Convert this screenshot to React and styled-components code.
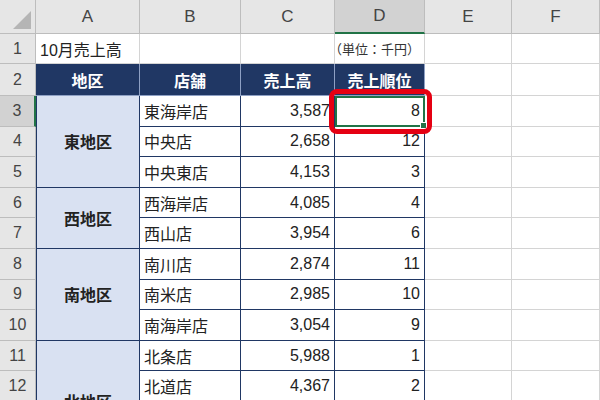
import React from "react"
import styled, { createGlobalStyle } from "styled-components"

const Global = createGlobalStyle`
  body { margin: 0; background: #fff; }
`

const NAVY = "#203764"
const GRID = "#d4d4d4"

const Sheet = styled.div`
  position: relative;
  width: 600px;
  height: 400px;
  overflow: hidden;
  font-family: "Liberation Sans", "Noto Sans CJK JP", sans-serif;
  font-size: 16px;
  color: #222;
`

const Grid = styled.div`
  display: grid;
  grid-template-columns: 36px 104px 101px 94px 90px 87px 88px;
  grid-template-rows: 34px 30px 32px repeat(12, 30.6px);
`

const Head = styled.div`
  grid-row: ${({ $r }) => $r};
  grid-column: ${({ $c }) => $c};
  background: ${({ $on }) => ($on ? "#d2d2d2" : "#e6e6e6")};
  color: #444;
  font-size: ${({ $col }) => ($col ? "17px" : "16px")};
  display: flex;
  align-items: center;
  justify-content: center;
  box-sizing: border-box;
  border-right: 1px solid ${({ $on, $col }) => ($on && !$col ? "#217346" : "#bdbdbd")};
  border-bottom: ${({ $on, $col }) => ($on && $col ? "2px solid #217346" : "1px solid #bdbdbd")};
  ${({ $on, $col }) => ($on && !$col ? "border-right-width: 2px;" : "")}
`

const Corner = styled(Head)`
  position: relative;
  &::after {
    content: "";
    position: absolute;
    right: 4px;
    bottom: 4px;
    border-left: 18px solid transparent;
    border-bottom: 18px solid #b5b5b5;
  }
`

const Cell = styled.div`
  grid-row: ${({ $r, $rs }) => ($rs ? `${$r} / span ${$rs}` : $r)};
  grid-column: ${({ $c }) => $c};
  background: ${({ $bg }) => $bg || "#fff"};
  color: ${({ $fg }) => $fg || "#222"};
  font-weight: ${({ $bold }) => ($bold ? 700 : 400)};
  display: flex;
  align-items: center;
  justify-content: ${({ $align }) => $align || "flex-start"};
  padding: 0 4px;
  box-sizing: border-box;
  white-space: nowrap;
  border-right: 1px solid ${({ $t }) => ($t ? NAVY : GRID)};
  border-bottom: 1px solid ${({ $t }) => ($t ? NAVY : GRID)};
  ${({ $left }) => ($left ? `border-left: 1px solid ${NAVY};` : "")}
  ${({ $small }) => ($small ? "font-size: 13px; align-items: flex-end; padding-bottom: 5px; color: #333;" : "")}
  ${({ $head }) => ($head ? "border-color: #8ea0c4;" : "")}
`

const Selected = styled.div`
  position: absolute;
  left: 335px;
  top: 96px;
  width: 90px;
  height: 31px;
  box-sizing: border-box;
  border: 2px solid #217346;
  &::after {
    content: "";
    position: absolute;
    right: -4px;
    bottom: -4px;
    width: 5px;
    height: 5px;
    background: #217346;
    border: 1px solid #fff;
  }
`

const Mark = styled.div`
  position: absolute;
  left: 329px;
  top: 89px;
  width: 103px;
  height: 45px;
  box-sizing: border-box;
  border: 5px solid #e50012;
  border-radius: 8px;
`

const rows = [
  ["東海岸店", "3,587", "8"],
  ["中央店", "2,658", "12"],
  ["中央東店", "4,153", "3"],
  ["西海岸店", "4,085", "4"],
  ["西山店", "3,954", "6"],
  ["南川店", "2,874", "11"],
  ["南米店", "2,985", "10"],
  ["南海岸店", "3,054", "9"],
  ["北条店", "5,988", "1"],
  ["北道店", "4,367", "2"],
  ["北海岸店", "3,612", "5"],
  ["北山店", "2,790", "7"],
]

const regions = [
  ["東地区", 4, 3],
  ["西地区", 7, 2],
  ["南地区", 9, 3],
  ["北地区", 12, 4],
]

const cols = ["A", "B", "C", "D", "E", "F"]

export default function App() {
  return (
    <Sheet>
      <Global />
      <Grid>
        <Corner $r={1} $c={1} />
        {cols.map((l, i) => (
          <Head key={l} $r={1} $c={i + 2} $col $on={l === "D"}>{l}</Head>
        ))}
        {Array.from({ length: 14 }, (_, i) => (
          <Head key={i} $r={i + 2} $c={1} $on={i === 2}>{i + 1}</Head>
        ))}

        <Cell $r={2} $c={2}>10月売上高</Cell>
        <Cell $r={2} $c={3} />
        <Cell $r={2} $c={4} />
        <Cell $r={2} $c={5} $align="flex-end" $small>（単位：千円）</Cell>
        <Cell $r={2} $c={6} />
        <Cell $r={2} $c={7} />

        {["地区", "店舗", "売上高", "売上順位"].map((h, i) => (
          <Cell key={h} $r={3} $c={i + 2} $bg={NAVY} $fg="#fff" $bold $align="center" $head>{h}</Cell>
        ))}
        <Cell $r={3} $c={6} />
        <Cell $r={3} $c={7} />

        {regions.map(([name, r, span]) => (
          <Cell key={name} $r={r} $rs={span} $c={2} $bg="#d9e1f2" $bold $align="center" $t $left>{name}</Cell>
        ))}

        {rows.map(([store, sales, rank], i) => (
          <React.Fragment key={store}>
            <Cell $r={i + 4} $c={3} $t>{store}</Cell>
            <Cell $r={i + 4} $c={4} $t $align="flex-end">{sales}</Cell>
            <Cell $r={i + 4} $c={5} $t $align="flex-end">{rank}</Cell>
            <Cell $r={i + 4} $c={6} />
            <Cell $r={i + 4} $c={7} />
          </React.Fragment>
        ))}
      </Grid>
      <Selected />
      <Mark />
    </Sheet>
  )
}
